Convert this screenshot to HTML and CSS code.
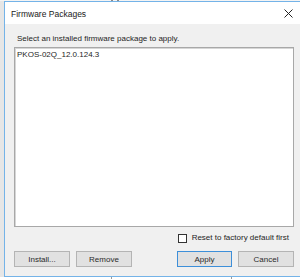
FILE: index.html
```html
<!DOCTYPE html>
<html>
<head>
<meta charset="utf-8">
<link rel="stylesheet" href="styles.css">
</head>
<body>
<div class="screen">
  <div class="topstrip">
    <span class="tick"></span><span class="tick"></span>
  </div>
  <div class="dialog">
    <div class="titlebar">
      <span class="title">Firmware Packages</span>
      <svg class="close" width="9" height="9" viewBox="0 0 9 9"><path d="M0.5 0.5 L8.5 8.5 M8.5 0.5 L0.5 8.5" stroke="#222" stroke-width="1"/></svg>
    </div>
    <div class="body">
      <div class="label">Select an installed firmware package to apply.</div>
      <div class="listbox">
        <div class="item">PKOS-02Q_12.0.124.3</div>
      </div>
      <div class="checkrow">
        <span class="checkbox"></span>
        <span class="checklabel">Reset to factory default first</span>
      </div>
      <div class="buttons">
        <div class="group">
          <button class="btn">Install...</button>
          <button class="btn">Remove</button>
        </div>
        <div class="group">
          <button class="btn default">Apply</button>
          <button class="btn">Cancel</button>
        </div>
      </div>
    </div>
  </div>
  <div class="under">
    <span class="col time">Time</span>
    <span class="col name">Name</span>
  </div>
</div>
</body>
</html>
```
FILE: styles.css
```css
* { box-sizing: border-box; }
html, body { margin: 0; padding: 0; }
body {
  font-family: "Liberation Sans", Arial, sans-serif;
  color: #1e1e1e;
  background: #e6e6e6;
}
.screen {
  width: 300px;
  height: 279px;
  overflow: hidden;
  background: #e6e6e6;
}
.topstrip {
  height: 1px;
  background: #f4f4f4;
  display: flex;
  padding-left: 111px;
  gap: 4px;
}
.tick { width: 2px; height: 1px; background: #8a8a8a; }
.dialog {
  margin-left: 4px;
  width: 300px;
  height: 276px;
  border: 1px solid #74b3e8;
  border-right: none;
  background: #f0f0f0;
  display: flex;
  flex-direction: column;
}
.titlebar {
  height: 22px;
  background: #ffffff;
  display: flex;
  align-items: center;
  padding-left: 6px;
  padding-right: 10px;
  justify-content: space-between;
  width: 298px;
}
.title { font-size: 8.5px; color: #1a1a1a; padding-top: 1px; }
.close { margin-top: 0px; }
.body {
  flex: 1;
  padding: 10px 9px 0 9px;
  width: 298px;
  display: flex;
  flex-direction: column;
}
.label { font-size: 8px; padding-left: 3px; line-height: 10px; }
.listbox {
  margin-top: 3px;
  height: 180px;
  background: #fff;
  border: 1px solid #a8a8a8;
  box-shadow: inset 1px 1px 0 #d6d6d6;
  padding: 2px 0 0 2px;
}
.item { font-size: 8px; line-height: 10px; }
.checkrow {
  margin-top: 6px;
  display: flex;
  align-items: center;
  justify-content: flex-end;
  padding-right: 5px;
  gap: 5px;
}
.checkbox {
  width: 9px;
  height: 9px;
  border: 1px solid #333;
  background: #fff;
}
.checklabel { font-size: 8px; line-height: 10px; }
.buttons {
  margin-top: 8px;
  display: flex;
  justify-content: space-between;
}
.group { display: flex; gap: 6px; }
.btn {
  width: 56px;
  height: 16px;
  padding: 0;
  font-family: "Liberation Sans", Arial, sans-serif;
  font-size: 8px;
  color: #2a2a2a;
  background: #e1e1e1;
  border: 1px solid #b4b4b4;
  border-radius: 0;
}
.btn.default { border: 1px solid #3d8fd9; width: 55px; }
.under {
  height: 3px;
  background: #ffffff;
  position: relative;
  overflow: hidden;
  font-size: 8px;
  display: flex;
}
.col { line-height: 10px; padding-left: 6px; border-left: 1px solid #9a9a9a; color: #555; }
.time { margin-left: 111px; width: 120px; }
.name { }
```
